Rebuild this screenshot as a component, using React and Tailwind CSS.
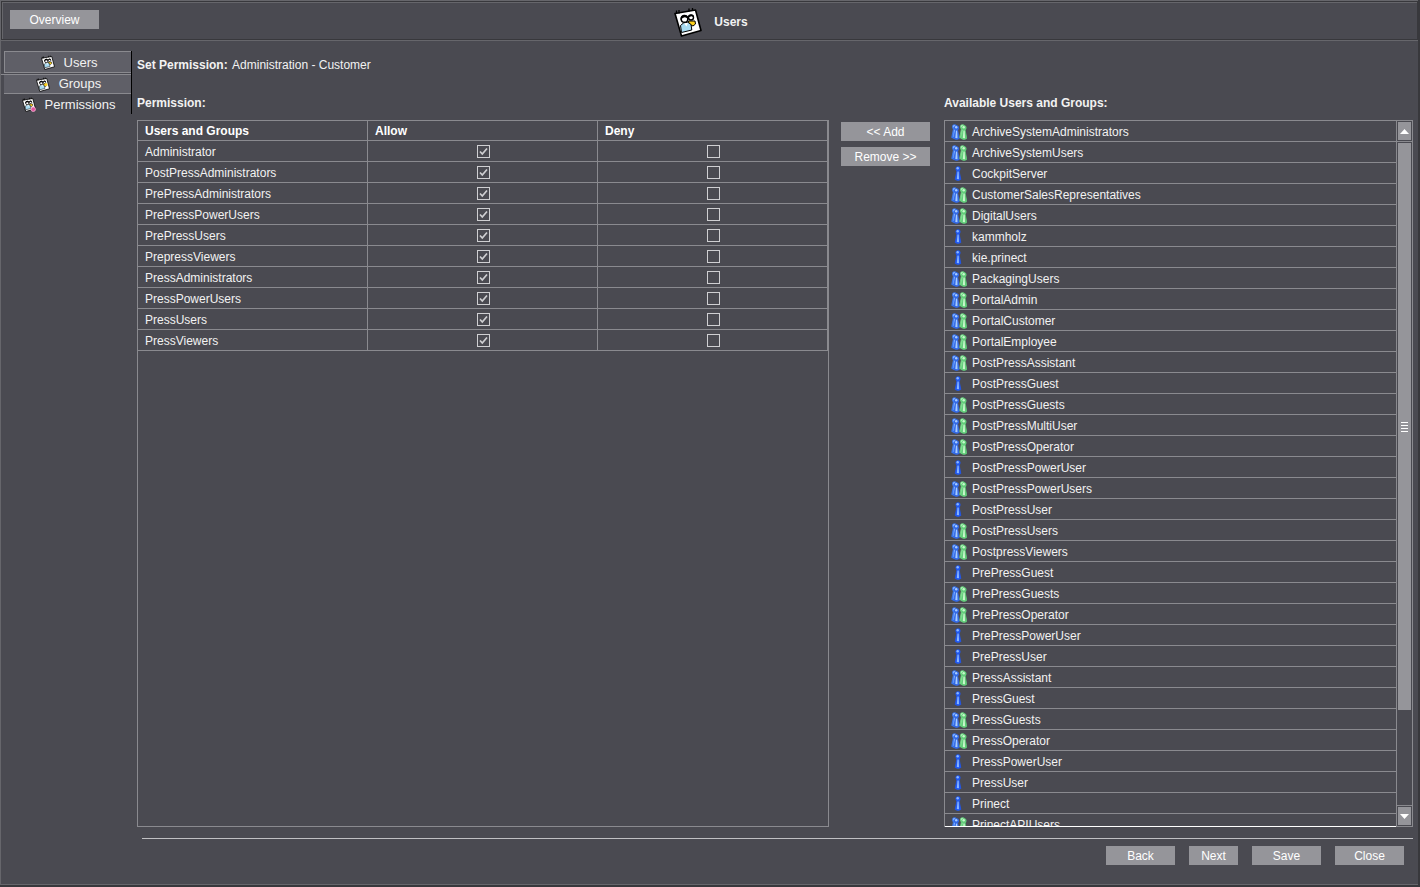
import { useRef, useState } from "react";
import clsx from "clsx";

const PERMISSIONS = [
  "Administrator",
  "PostPressAdministrators",
  "PrePressAdministrators",
  "PrePressPowerUsers",
  "PrePressUsers",
  "PrepressViewers",
  "PressAdministrators",
  "PressPowerUsers",
  "PressUsers",
  "PressViewers",
];

const AVAILABLE = [
  ["ArchiveSystemAdministrators", "group"],
  ["ArchiveSystemUsers", "group"],
  ["CockpitServer", "user"],
  ["CustomerSalesRepresentatives", "group"],
  ["DigitalUsers", "group"],
  ["kammholz", "user"],
  ["kie.prinect", "user"],
  ["PackagingUsers", "group"],
  ["PortalAdmin", "group"],
  ["PortalCustomer", "group"],
  ["PortalEmployee", "group"],
  ["PostPressAssistant", "group"],
  ["PostPressGuest", "user"],
  ["PostPressGuests", "group"],
  ["PostPressMultiUser", "group"],
  ["PostPressOperator", "group"],
  ["PostPressPowerUser", "user"],
  ["PostPressPowerUsers", "group"],
  ["PostPressUser", "user"],
  ["PostPressUsers", "group"],
  ["PostpressViewers", "group"],
  ["PrePressGuest", "user"],
  ["PrePressGuests", "group"],
  ["PrePressOperator", "group"],
  ["PrePressPowerUser", "user"],
  ["PrePressUser", "user"],
  ["PressAssistant", "group"],
  ["PressGuest", "user"],
  ["PressGuests", "group"],
  ["PressOperator", "group"],
  ["PressPowerUser", "user"],
  ["PressUser", "user"],
  ["Prinect", "user"],
  ["PrinectAPIUsers", "group"],
];

function NotepadIcon({ className, variant }) {
  return (
    <svg className={className} viewBox="0 0 28 30" aria-hidden="true">
      <path
        d="M1 6.500 21.500 3 27 23.500 7.500 29Z"
        fill="#fff"
        stroke="#000"
        strokeWidth="1.600"
        strokeLinejoin="round"
      />
      <path
        d="M2.500 3.500v3.500M5 3v3.500M15 1.500v3M18.500 1v3"
        stroke="#000"
        strokeWidth="1.300"
        fill="none"
      />
      {/* person at the back */}
      <path d="M14.500 14h6.500l.5 3-2.500 2-4-2Z" fill="#ffd21c" stroke="#000" strokeWidth="1" />
      <circle cx="17" cy="10.500" r="2.500" fill="#fff" stroke="#000" strokeWidth="1.400" />
      <path d="M14.300 10.500c0-4 5.500-4 5.500-.5l-2.500-.7Z" fill="#000" />
      {/* person in front */}
      <path
        d="M7.500 25.500 6.500 18.500 9.500 16l4.500-.7 3 2.200.8 5.500Z"
        fill="#a9dcf2"
        stroke="#000"
        strokeWidth="1"
      />
      <path d="M10 16.500 12.500 19.500 14 15.500Z" fill="#fff" />
      <circle cx="10.500" cy="12" r="3.300" fill="#fff" stroke="#000" strokeWidth="1.500" />
      <path d="M6.500 13c-.5-6.500 7.500-7 8-1.500l-3.700-1.200-2 .7Z" fill="#000" />
      {variant === "groups" && <circle cx="20" cy="15" r="3" fill="#ffd21c" />}
      {variant === "permissions" && (
        <circle cx="22.500" cy="24.500" r="4.500" fill="#e0559c" stroke="#f6b5d6" strokeWidth="1.500" />
      )}
    </svg>
  );
}

function Pawn({ x, y = 0, fill, light }) {
  return (
    <g transform={`translate(${x} ${y})`}>
      <path
        d="M3 4.500 1.200 13.500Q4 15.500 6.800 13.500L5 4.500Z"
        fill={fill}
        stroke={fill}
        strokeWidth="0.800"
        strokeLinejoin="round"
      />
      <path d="M3.500 5.500 2.800 13l2.200.2-.3-7.700Z" fill={light} />
      <circle cx="4" cy="2.800" r="2.500" fill={fill} />
      <circle cx="3.700" cy="2.300" r="1.200" fill={light} />
    </g>
  );
}

function MemberIcon({ type }) {
  return (
    <svg className="h-4 w-4 shrink-0" viewBox="0 0 16 16" aria-hidden="true">
      {type === "group" ? (
        <>
          <Pawn x={-0.5} fill="#3b78f0" light="#86b4ff" />
          <Pawn x={1.5} y={1} fill="#3268e4" light="#a8ccff" />
          <Pawn x={7.5} fill="#6ed884" light="#b4f5ba" />
          <Pawn x={9} y={1} fill="#62cc7a" light="#c8f8cc" />
        </>
      ) : (
        <Pawn x={3} fill="#1f58f2" light="#8ab6ff" />
      )}
    </svg>
  );
}

function Button({ className, children, ...props }) {
  return (
    <button
      type="button"
      className={clsx(
        "h-[19px] bg-[#95959a] text-center leading-4 text-white hover:bg-[#a2a2a7]",
        className
      )}
      {...props}
    >
      {children}
    </button>
  );
}

function CheckBox({ label, checked, onChange }) {
  return (
    <div className="grid place-items-center">
      <input
        type="checkbox"
        aria-label={label}
        checked={checked}
        onChange={onChange}
        className="peer col-start-1 row-start-1 size-[13px] appearance-none border border-[#cfcfd2]"
      />
      <svg
        className="pointer-events-none invisible col-start-1 row-start-1 size-[13px] peer-checked:visible"
        viewBox="0 0 13 13"
        aria-hidden="true"
      >
        <path d="M3 6.500 5.300 9 10 3.500" fill="none" stroke="#cfcfd2" strokeWidth="1.700" />
      </svg>
    </div>
  );
}

function PermissionTable() {
  const [rows, setRows] = useState(
    PERMISSIONS.map((name) => ({ name, allow: true, deny: false }))
  );

  const toggle = (index, key) =>
    setRows(
      rows.map((row, i) => (i === index ? { ...row, [key]: !row[key] } : row))
    );

  return (
    <table className="w-full table-fixed border-separate border-spacing-0">
      <thead>
        <tr className="h-5 text-left text-white">
          <th className="border-r border-b border-[#8a8a8f] p-0 pt-px pl-[7px]">Users and Groups</th>
          <th className="border-r border-b border-[#8a8a8f] p-0 pt-px pl-[7px]">Allow</th>
          <th className="border-r border-b border-[#8a8a8f] p-0 pt-px pl-[7px]">Deny</th>
        </tr>
      </thead>
      <tbody>
        {rows.map((row, i) => (
          <tr key={row.name} className="h-[21px]">
            <td className="border-r border-b border-[#8a8a8f] p-0 pt-px pl-[7px]">{row.name}</td>
            <td className="border-r border-b border-[#8a8a8f] p-0 pl-0.5">
              <CheckBox
                label={`Allow ${row.name}`}
                checked={row.allow}
                onChange={() => toggle(i, "allow")}
              />
            </td>
            <td className="border-r border-b border-[#8a8a8f] p-0 pl-0.5">
              <CheckBox
                label={`Deny ${row.name}`}
                checked={row.deny}
                onChange={() => toggle(i, "deny")}
              />
            </td>
          </tr>
        ))}
      </tbody>
    </table>
  );
}

function ScrollButton({ label, points, onClick }) {
  return (
    <button
      type="button"
      aria-label={label}
      onClick={onClick}
      className="m-px grid h-[18px] place-items-center bg-[#95959a]"
    >
      <svg className="h-[5px] w-[9px]" viewBox="0 0 9 5" aria-hidden="true">
        <polygon points={points} fill="#fff" />
      </svg>
    </button>
  );
}

function AvailableList() {
  const listRef = useRef(null);
  const scroll = (top) => listRef.current.scrollBy({ top });

  return (
    <div className="flex min-h-0 border-t border-l border-[#8a8a8f]">
      <ul
        ref={listRef}
        className="min-w-0 flex-1 overflow-y-auto border-b border-white [scrollbar-width:none]"
      >
        {AVAILABLE.map(([name, type]) => (
          <li
            key={name}
            className="flex h-[21px] items-center gap-[5px] border-b border-[#8a8a8f] pt-px pl-[6px]"
          >
            <MemberIcon type={type} />
            {name}
          </li>
        ))}
      </ul>
      <div className="flex w-[17px] flex-col border-x border-b border-[#8a8a8f]">
        <ScrollButton label="Scroll up" points="4.500,0 9,5 0,5" onClick={() => scroll(-21)} />
        <div className="grid flex-1 grid-rows-[6fr_1fr] border-y border-[#8a8a8f] px-px pt-px">
          <div className="flex flex-col items-center justify-center gap-0.5 bg-[#95959a]">
            <span className="h-px w-[7px] bg-white" />
            <span className="h-px w-[7px] bg-white" />
            <span className="h-px w-[7px] bg-white" />
            <span className="h-px w-[7px] bg-white" />
          </div>
        </div>
        <ScrollButton label="Scroll down" points="0,0 9,0 4.500,5" onClick={() => scroll(21)} />
      </div>
    </div>
  );
}

function Sidebar() {
  return (
    <nav className="w-[131px] shrink-0 text-[13px] leading-4">
      <div className="flex flex-col border-r border-black">
        <button
          type="button"
          className="ml-[3px] flex h-[22px] items-center justify-center gap-[9px] border border-r-0 border-[#8a8a8f] bg-[#5f5f67] pt-px pl-0.5"
        >
          <NotepadIcon className="h-[15px] w-[14px]" variant="users" />
          Users
        </button>
        <div className="mt-px flex flex-col border-t border-[#8a8a8f]">
          <button
            type="button"
            className="ml-[3px] flex h-[19px] items-center justify-center gap-[9px] border-b border-[#8a8a8f] bg-[#5f5f67] pl-0.5"
          >
            <NotepadIcon className="h-[15px] w-[14px]" variant="groups" />
            Groups
          </button>
        </div>
        <button
          type="button"
          className="ml-[3px] flex h-5 items-center justify-center gap-[9px] pt-px pl-0.5"
        >
          <NotepadIcon className="h-[15px] w-[14px]" variant="permissions" />
          Permissions
        </button>
      </div>
    </nav>
  );
}

export default function App() {
  return (
    <div className="flex h-screen flex-col bg-[#38383c] pr-0.5 pb-0.5 font-['Liberation_Sans',Arial,sans-serif] text-xs text-[#f2f2f2]">
      <div className="flex min-h-0 flex-1 flex-col border-t border-b border-l border-[#66666b] bg-[#4a4a51]">
        <header className="border-b border-[#66666b]">
          <div className="border border-[#38383c]">
            <div className="grid h-[37px] grid-cols-[1fr_auto_1fr] items-center border-t border-l border-[#66666b]">
              <Button className="mt-[7px] ml-[7px] w-[89px] self-start">Overview</Button>
              <h1 className="flex items-center gap-3 pt-px pl-0.5 font-bold">
                <NotepadIcon className="h-[30px] w-7" variant="title" />
                Users
              </h1>
            </div>
          </div>
        </header>

        <div className="flex min-h-0 flex-1 gap-[5px] pt-[10px] pr-[5px]">
          <Sidebar />
          <main className="flex min-w-0 flex-1 flex-col pt-[6px]">
            <p className="leading-4">
              <b>Set Permission:</b> <span className="ml-px">Administration - Customer</span>
            </p>

            <div className="mt-[22px] grid min-h-0 flex-1 grid-cols-[692fr_91px_469fr] grid-rows-[16px_minmax(0,1fr)] gap-x-3 gap-y-[9px] leading-4">
              <h2 className="font-bold">Permission:</h2>
              <h2 className="col-start-3 font-bold">Available Users and Groups:</h2>
              <section className="overflow-y-auto border border-[#8a8a8f]">
                <PermissionTable />
              </section>
              <div className="flex flex-col gap-[6px] pt-0.5">
                <Button className="w-[89px]">&lt;&lt; Add</Button>
                <Button className="w-[89px]">Remove &gt;&gt;</Button>
              </div>
              <AvailableList />
            </div>

            <footer className="mt-[11px] ml-[5px] flex justify-end gap-[14px] border-t border-[#c0c0c3] pt-[7px] pr-[9px] pb-[19px]">
              <Button className="w-[69px]">Back</Button>
              <Button className="w-[49px]">Next</Button>
              <Button className="w-[69px]">Save</Button>
              <Button className="w-[69px]">Close</Button>
            </footer>
          </main>
        </div>
      </div>
    </div>
  );
}
